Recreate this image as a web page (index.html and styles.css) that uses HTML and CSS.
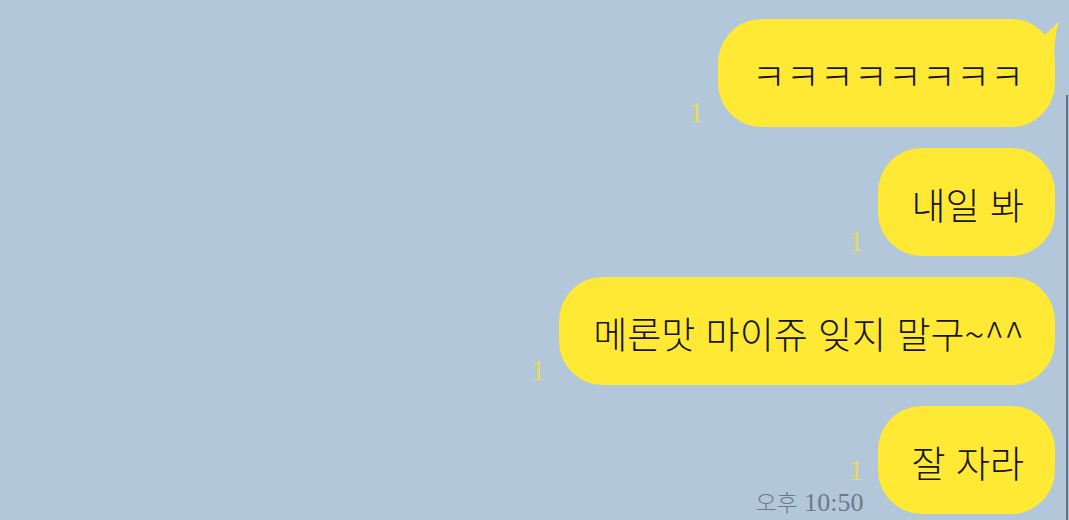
FILE: index.html
```html
<!DOCTYPE html>
<html lang="ko">
<head>
    <meta charset="UTF-8">
    <meta name="viewport" content="width=device-width, initial-scale=1.0">
    <title>채팅</title>
    <link rel="stylesheet" href="styles.css">
</head>
<body>
    <div id="chat-window">
        <div class="chat-list">
            <div class="msg-row">
                <div class="meta">
                    <span class="read-count">1</span>
                </div>
                <div class="bubble first">
                    <span class="jamo">ㅋㅋㅋㅋㅋㅋㅋㅋ</span>
                    <svg class="tail" width="34" height="46" viewBox="0 0 34 46">
                        <path d="M6 24 Q21 15 31 3 Q26 18 26 46 L6 46 Z" fill="#ffe935"/>
                    </svg>
                </div>
            </div>
            <div class="msg-row">
                <div class="meta">
                    <span class="read-count">1</span>
                </div>
                <div class="bubble">내일 봐</div>
            </div>
            <div class="msg-row">
                <div class="meta">
                    <span class="read-count">1</span>
                </div>
                <div class="bubble">메론맛 마이쥬 잊지 말구~^^</div>
            </div>
            <div class="msg-row">
                <div class="meta">
                    <span class="read-count">1</span>
                    <span class="time"><span class="ampm">오후</span> 10:50</span>
                </div>
                <div class="bubble">잘 자라</div>
            </div>
        </div>
        <div class="scroll-edge"></div>
    </div>
</body>
</html>
```

FILE: styles.css
```css
body {
    margin: 0;
    background-color: #b2c7da;
    font-family: "Noto Sans CJK KR", "Noto Sans", sans-serif;
}

#chat-window {
    position: relative;
    height: 520px;
    overflow: hidden;
}

.chat-list {
    display: flex;
    flex-direction: column;
    align-items: flex-end;
    gap: 21px;
    padding: 19px 14px 0 0;
}

.msg-row {
    display: flex;
    align-items: flex-end;
    gap: 14px;
}

.meta {
    display: flex;
    flex-direction: column;
    align-items: flex-end;
}

.read-count {
    font-family: "Liberation Serif", serif;
    font-size: 30px;
    line-height: 1;
    color: #e6dc5a;
}

.time {
    font-family: "Liberation Serif", "Noto Sans CJK KR", serif;
    font-size: 26px;
    line-height: 1;
    color: #6b7a8b;
    margin-top: 5px;
    margin-bottom: -2px;
}

.ampm {
    font-family: "Noto Sans CJK KR", sans-serif;
    font-size: 23px;
    font-weight: 300;
}

.bubble {
    position: relative;
    height: 108px;
    box-sizing: border-box;
    display: flex;
    align-items: center;
    padding: 3px 31px 0 34px;
    background-color: #ffe935;
    border-radius: 44px;
    font-size: 37px;
    font-weight: 300;
    color: #151515;
    white-space: nowrap;
}

.tail {
    position: absolute;
    top: -1px;
    right: -7px;
}

.scroll-edge {
    position: absolute;
    right: 1px;
    top: 95px;
    bottom: 0;
    width: 2px;
    background-color: #5f7083;
}
```
